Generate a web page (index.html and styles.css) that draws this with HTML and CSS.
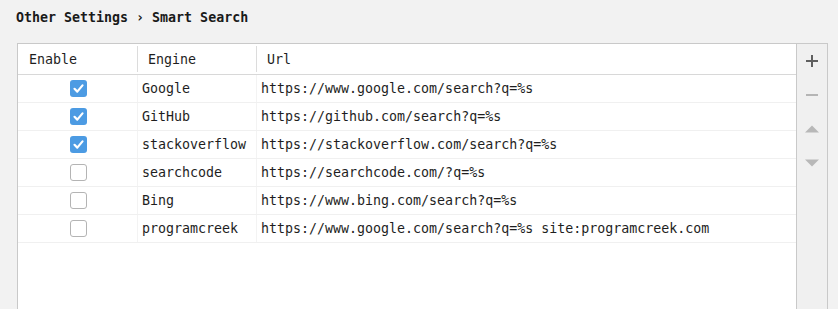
FILE: index.html
```html
<!DOCTYPE html>
<html>
<head>
<meta charset="utf-8">
<link rel="stylesheet" href="styles.css">
</head>
<body>
<div class="page">
  <div class="crumb">Other Settings › Smart Search</div>
  <div class="panel">
    <div class="table">
      <div class="row head">
        <div class="cell c1">Enable</div>
        <div class="cell c2">Engine</div>
        <div class="cell c3">Url</div>
      </div>
      <div class="row">
        <div class="cell c1"><span class="cb on"><svg viewBox="0 0 17 17" width="17" height="17"><path d="M4.5 8.8 L7.3 11.6 L12.5 5.4" fill="none" stroke="#fff" stroke-width="2.2" stroke-linecap="round" stroke-linejoin="round"/></svg></span></div>
        <div class="cell c2">Google</div>
        <div class="cell c3">https://www.google.com/search?q=%s</div>
      </div>
      <div class="row">
        <div class="cell c1"><span class="cb on"><svg viewBox="0 0 17 17" width="17" height="17"><path d="M4.5 8.8 L7.3 11.6 L12.5 5.4" fill="none" stroke="#fff" stroke-width="2.2" stroke-linecap="round" stroke-linejoin="round"/></svg></span></div>
        <div class="cell c2">GitHub</div>
        <div class="cell c3">https://github.com/search?q=%s</div>
      </div>
      <div class="row">
        <div class="cell c1"><span class="cb on"><svg viewBox="0 0 17 17" width="17" height="17"><path d="M4.5 8.8 L7.3 11.6 L12.5 5.4" fill="none" stroke="#fff" stroke-width="2.2" stroke-linecap="round" stroke-linejoin="round"/></svg></span></div>
        <div class="cell c2">stackoverflow</div>
        <div class="cell c3">https://stackoverflow.com/search?q=%s</div>
      </div>
      <div class="row">
        <div class="cell c1"><span class="cb"></span></div>
        <div class="cell c2">searchcode</div>
        <div class="cell c3">https://searchcode.com/?q=%s</div>
      </div>
      <div class="row">
        <div class="cell c1"><span class="cb"></span></div>
        <div class="cell c2">Bing</div>
        <div class="cell c3">https://www.bing.com/search?q=%s</div>
      </div>
      <div class="row">
        <div class="cell c1"><span class="cb"></span></div>
        <div class="cell c2">programcreek</div>
        <div class="cell c3">https://www.google.com/search?q=%s site:programcreek.com</div>
      </div>
    </div>
    <div class="tools">
      <div class="tool"><svg width="14" height="14" viewBox="0 0 14 14"><path d="M7 1 V13 M1 7 H13" stroke="#5f5f5f" stroke-width="2"/></svg></div>
      <div class="tool"><svg width="14" height="14" viewBox="0 0 14 14"><path d="M1 7 H13" stroke="#b5b5b5" stroke-width="2"/></svg></div>
      <div class="tool"><svg width="14" height="8" viewBox="0 0 14 8"><path d="M0 7.5 L7 0.5 L14 7.5 Z" fill="#b8b8b8"/></svg></div>
      <div class="tool"><svg width="14" height="8" viewBox="0 0 14 8"><path d="M0 0.5 L14 0.5 L7 7.5 Z" fill="#b8b8b8"/></svg></div>
    </div>
  </div>
</div>
</body>
</html>
```

FILE: styles.css
```css
html, body {
  margin: 0;
  padding: 0;
  background: #f2f2f2;
  height: 100%;
  overflow: hidden;
}
body {
  font-family: "DejaVu Sans Mono", "Liberation Mono", monospace;
  font-size: 13.3px;
  color: #1e1e1e;
}
.page {
  padding: 8px 10px 0 16px;
}
.crumb {
  font-weight: bold;
  height: 19px;
  line-height: 19px;
  margin-bottom: 16px;
  color: #1a1a1a;
}
.panel {
  display: flex;
  margin-left: 1px;
  height: 266px;
}
.table {
  flex: 1;
  background: #fff;
  border: 1px solid #c9c9c9;
  border-bottom: none;
}
.row {
  display: flex;
  height: 27px;
  border-bottom: 1px solid #f0f0f0;
}
.row.head {
  height: 30px;
  border-bottom: 1px solid #d8d8d8;
}
.cell {
  display: flex;
  align-items: center;
  padding-left: 4px;
  white-space: nowrap;
}
.row .cell + .cell {
  border-left: 1px solid #f3f3f3;
}
.row.head .cell {
  padding-left: 10px;
  margin: 2px 0;
}
.row.head .cell + .cell {
  border-left: 1px solid #dcdcdc;
}
.row.head .c1 {
  padding-left: 11px;
}
.c1 {
  width: 119px;
  box-sizing: border-box;
}
.row:not(.head) .c1 {
  justify-content: center;
  padding-left: 0;
}
.c2 {
  width: 119px;
  box-sizing: border-box;
}
.c3 {
  flex: 1;
}
.cb {
  width: 17px;
  height: 17px;
  box-sizing: border-box;
  border-radius: 3px;
  border: 1px solid #b4b4b4;
  background: #fff;
  display: block;
  margin-left: 1px;
}
.cb.on {
  border: none;
  background: #4c9be3;
}
.cb svg {
  display: block;
}
.tools {
  width: 31px;
  box-sizing: border-box;
  background: #f0f0f0;
  border: 1px solid #c9c9c9;
  border-left: none;
  border-bottom: none;
}
.tool {
  height: 34px;
  display: flex;
  align-items: center;
  justify-content: center;
}
.tool svg {
  display: block;
}
```
